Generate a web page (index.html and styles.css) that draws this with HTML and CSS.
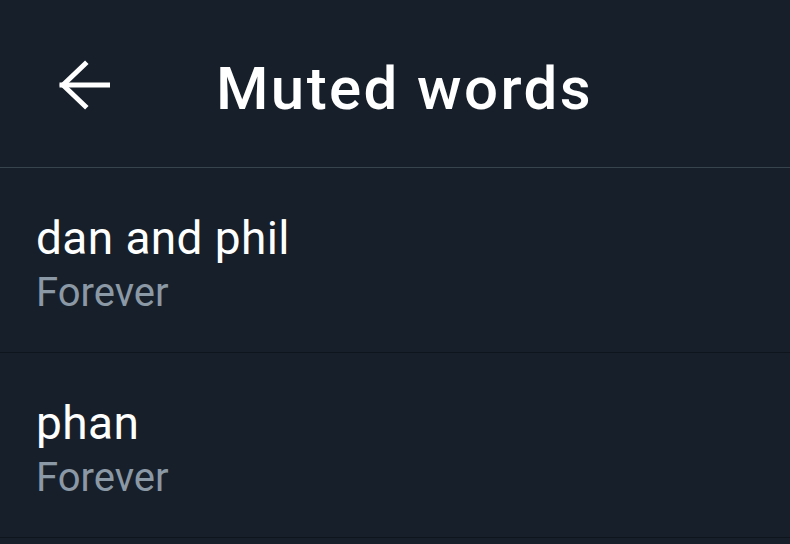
FILE: index.html
```html
<!DOCTYPE html>
<html>
<head>
<meta charset="utf-8">
<link rel="stylesheet" href="styles.css">
</head>
<body>
<div class="screen">
  <header class="header">
    <div class="back">
      <svg width="52" height="52" viewBox="0 0 52 52" fill="none" stroke="#ffffff" stroke-width="5" stroke-linecap="square">
        <path d="M4 26 H50"/>
        <path d="M27 5 L5 26 L27 47"/>
      </svg>
    </div>
    <h1 class="title">Muted words</h1>
  </header>
  <ul class="list">
    <li class="item">
      <div class="word">dan and phil</div>
      <div class="duration">Forever</div>
    </li>
    <li class="item">
      <div class="word">phan</div>
      <div class="duration">Forever</div>
    </li>
  </ul>
</div>
</body>
</html>
```

FILE: styles.css
```css
html, body {
  margin: 0;
  padding: 0;
  background: #17202a;
}
.screen {
  width: 790px;
  height: 544px;
  overflow: hidden;
  background: #17202a;
  font-family: Roboto, "Noto Sans", sans-serif;
  color: #ffffff;
}
.header {
  display: flex;
  align-items: center;
  height: 168px;
  border-bottom: 1px solid #38444d;
  box-sizing: border-box;
}
.back {
  width: 52px;
  height: 52px;
  margin-left: 58px;
  margin-top: 2px;
}
.back svg {
  display: block;
}
.title {
  margin: 10px 0 0 106px;
  font-size: 60px;
  line-height: 70px;
  font-weight: 500;
  letter-spacing: 2.4px;
}
.list {
  list-style: none;
  margin: 0;
  padding: 0;
}
.item {
  height: 185px;
  box-sizing: border-box;
  border-bottom: 1px solid #0f151c;
  padding: 42px 0 0 36px;
}
.word {
  font-size: 46px;
  line-height: 56px;
  letter-spacing: 0.4px;
}
.duration {
  font-size: 40px;
  line-height: 54px;
  color: #8b98a5;
}
```
